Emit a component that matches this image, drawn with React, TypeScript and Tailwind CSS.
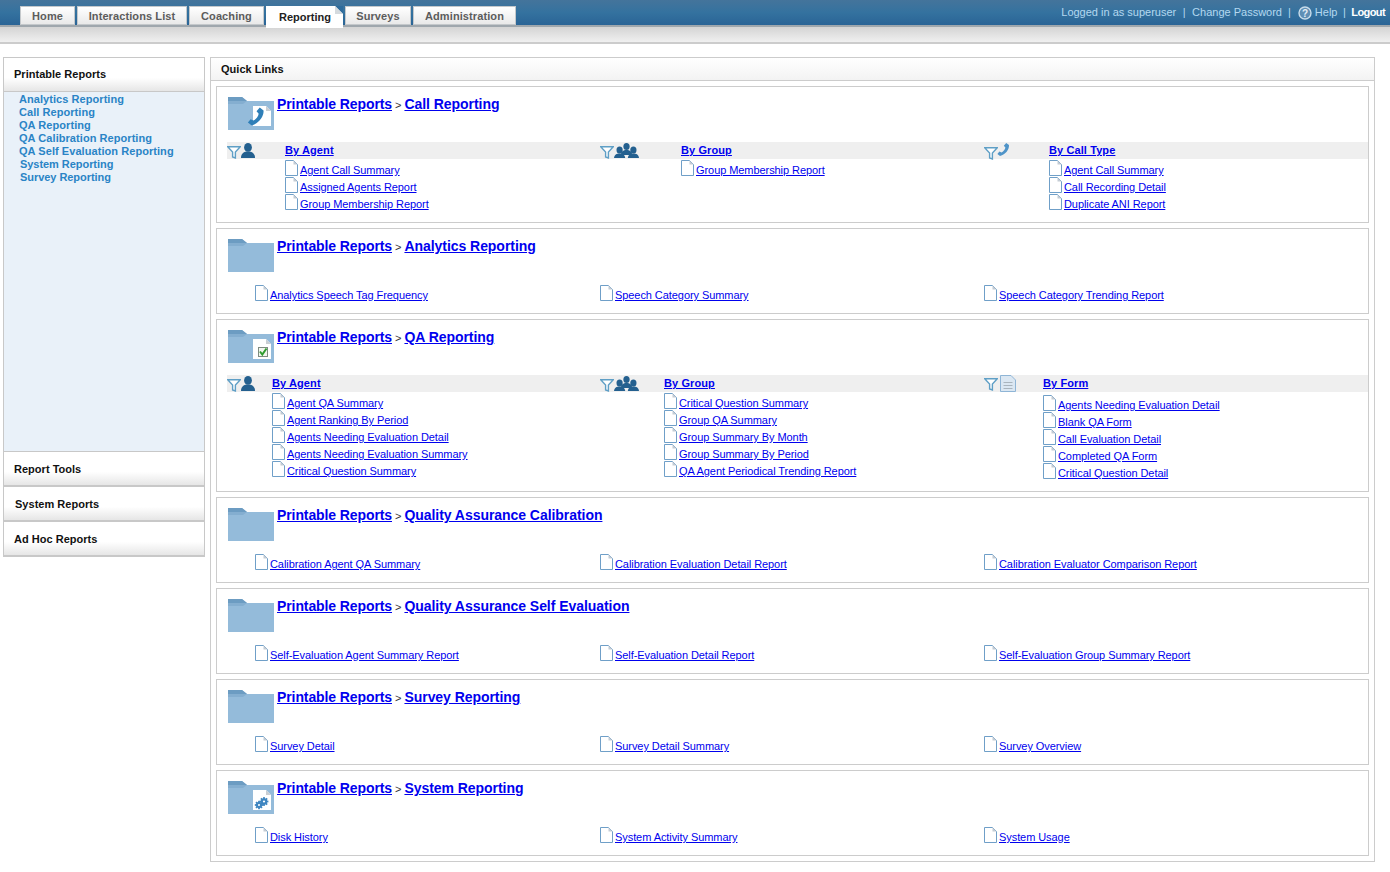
import React from "react";

const PageIcon = () => (
  <svg width="13" height="16" viewBox="0 0 13 16" className="shrink-0">
    <path d="M.5.5H8.5L12.5 4.5V15.5H.5Z" fill="#fff" stroke="#6f9fc8" />
    <path d="M8.5.5V4.5H12.5Z" fill="#c4ccd4" />
  </svg>
);

const FilterIcon = ({ top }: { top: string }) => (
  <svg width="14" height="13" viewBox="0 0 14 13" className={`shrink-0 ${top}`}>
    <path d="M.7.8H13.3L8.4 6V12L5.6 11V6Z" fill="#fff" stroke="#5f9fc6" strokeWidth="1.4" />
  </svg>
);

const Person = () => (
  <g>
    <ellipse cx="7" cy="4.4" rx="3.9" ry="4.4" fill="#24608f" />
    <path d="M0 15C0 10.5 3 8.6 7 8.6S14 10.5 14 15Z" fill="#24608f" />
  </g>
);

const PersonIcon = () => (
  <svg width="14" height="15" viewBox="0 0 14 15" className="shrink-0"><Person /></svg>
);

const GroupIcon = () => (
  <svg width="25" height="15" viewBox="0 0 25 15" className="shrink-0">
    <g transform="translate(0 3.5) scale(.8)"><Person /></g>
    <g transform="translate(13.8 3.5) scale(.8)"><Person /></g>
    <g transform="translate(6.9 0) scale(.8)"><Person /></g>
  </svg>
);

const PhonePath = ({ c }: { c: string }) => (
  <path
    d="M10.2.4 13 2.6C13.3 7 9.6 12.2 4 13.6L1.4 11.4 3.4 9 5.6 10C7.6 8.9 9 7 9.4 5L7.8 3.2Z"
    fill={c}
  />
);

const PhoneIcon = () => (
  <svg width="14" height="15" viewBox="0 0 14 14" className="shrink-0"><PhonePath c="#4f94c8" /></svg>
);

const FormIcon = () => (
  <svg width="16" height="17" viewBox="0 0 16 17" className="shrink-0">
    <path d="M.5.5H11L15.5 5V16.5H.5Z" fill="#dbe7f2" stroke="#8fb5d6" />
    <path d="M3.5 7.5H12.5M3.5 10.5H12.5M3.5 13.5H12.5" stroke="#a9b4bd" strokeWidth="1.2" />
  </svg>
);

const Gear = ({ x, y, r }: { x: number; y: number; r: number }) => (
  <g transform={`translate(${x} ${y})`}>
    <circle r={r} fill="#3f86c0" />
    {[0, 45, 90, 135].map((a) => (
      <rect key={a} x={-r - 1.2} y={-0.9} width={2 * r + 2.4} height={1.8} fill="#3f86c0" transform={`rotate(${a})`} />
    ))}
    <circle r={r * 0.35} fill="#fff" />
  </g>
);

const Folder = ({ kind }: { kind?: "phone" | "check" | "gear" }) => (
  <svg width="46" height="33" viewBox="0 0 46 33" className="shrink-0">
    <path d="M0 0H14L19 4H46V33H0Z" fill="#94bbda" />
    <path d="M0 0H14L19 4H0Z" fill="#6c9cc2" />
    <path d="M0 4H19L15 7H0Z" fill="#84aed0" />
    {kind && (
      <g>
        <path d="M25 9H38L43 14V29H25Z" fill="#fff" />
        <path d="M38 9V14H43Z" fill="#c9ced3" />
      </g>
    )}
    {kind === "phone" && (
      <g transform="translate(18 10) scale(1.35)"><PhonePath c="#2f7fb8" /></g>
    )}
    {kind === "check" && (
      <g>
        <rect x="30.5" y="17.5" width="9" height="9" fill="#f2f5ee" stroke="#7e8b80" />
        <path d="M32 21.5 34.3 24.5 38.5 18.5" fill="none" stroke="#2f9c2f" strokeWidth="2" />
      </g>
    )}
    {kind === "gear" && (
      <g>
        <Gear x={36} y={20.5} r={3.2} />
        <Gear x={31} y={24} r={3} />
      </g>
    )}
  </svg>
);

const Item = ({ label }: { label: string }) => (
  <div className="flex h-[17px] items-start gap-[2px]">
    <PageIcon />
    <a href="#" className="mt-[4px] text-[11px] leading-[13px] tracking-[-0.07px] whitespace-nowrap text-[#0000ee] underline">
      {label}
    </a>
  </div>
);

const Title = ({ name, kind }: { name: string; kind?: "phone" | "check" | "gear" }) => (
  <div className="flex h-[55px] items-start pt-[10px] pl-[11px]">
    <Folder kind={kind} />
    <div className="-mt-[2px] ml-[3px] text-[14px] leading-[18px] font-bold whitespace-nowrap">
      <a href="#" className="tracking-[-0.1px] text-[#0000ee] underline">Printable Reports</a>
      <span className="mx-[3px] text-[11px] font-normal text-[#333]">&gt;</span>
      <a href="#" className="tracking-[-0.05px] text-[#0000ee] underline">{name}</a>
    </div>
  </div>
);

const Simple = ({ name, kind, items }: { name: string; kind?: "phone" | "check" | "gear"; items: string[] }) => (
  <section className="border border-[#cccccc] pb-[11px]">
    <Title name={name} kind={kind} />
    <div className="ml-[10px] grid grid-cols-[373px_384px_1fr] pt-[1px]">
      <div className="pl-[28px]"><Item label={items[0]} /></div>
      <Item label={items[1]} />
      <Item label={items[2]} />
    </div>
  </section>
);

const Head = ({ icons, label, w }: { icons: React.ReactNode; label: string; w: string }) => (
  <div className="flex h-[17px] items-start bg-[#efefef]">
    <div className={`flex h-[17px] shrink-0 items-start pt-[1px] ${w}`}>{icons}</div>
    <a href="#" className="mt-[2px] text-[11px] leading-[13px] font-bold tracking-[0.1px] whitespace-nowrap text-[#0000ee] underline">
      {label}
    </a>
  </div>
);

const sideLinks = [
  "Analytics Reporting",
  "Call Reporting",
  "QA Reporting",
  "QA Calibration Reporting",
  "QA Self Evaluation Reporting",
  "System Reporting",
  "Survey Reporting",
];

const SideHead = ({ label, cls = "" }: { label: string; cls?: string }) => (
  <div className={`flex h-[35px] items-center border-x border-[#c8c8c8] bg-gradient-to-b from-white from-60% to-[#e6e6e6] text-[11px] leading-[13px] font-bold tracking-[0.02px] text-[#111] ${cls}`}>
    {label}
  </div>
);

const tabs = ["Home", "Interactions List", "Coaching", "Reporting", "Surveys", "Administration"];
const tabW = ["w-[55px]", "w-[110px]", "w-[75px]", "w-[77px]", "w-[66px]", "w-[103px]"];

export default function App() {
  return (
    <div className="min-h-[872px] bg-white [font-family:'Liberation_Sans',Arial,sans-serif]">
      <header className="flex h-[27px] justify-between border-b-2 border-[#9fa7ad] bg-gradient-to-b from-[#44749b] via-[#34729f] to-[#2a6496] pt-[6px] pl-[20px]">
        <nav className="flex items-start gap-[2px]">
          {tabs.map((t, i) =>
            t === "Reporting" ? (
              <div key={t} className={`relative flex h-[22px] items-center justify-center bg-white pl-[1px] text-[11px] leading-[13px] font-bold tracking-[0.02px] text-[#222] ${tabW[i]}`}>
                {t}
                <svg width="8" height="8" viewBox="0 0 8 8" className="absolute top-0 right-0">
                  <path d="M0 0H8V8Z" fill="#2f6c9c" />
                  <path d="M0 0 8 8H0Z" fill="#d5dade" />
                </svg>
              </div>
            ) : (
              <div key={t} className={`flex h-[19px] items-center justify-center border border-[#c4c8cb] bg-gradient-to-b from-white to-[#e9e9e9] pt-[1px] text-[11px] leading-[13px] font-bold tracking-[0.1px] text-[#5c5c5c] ${tabW[i]}`}>
                {t}
              </div>
            )
          )}
        </nav>
        <div className="-mt-[6px] flex h-[25px] items-center pr-[5px] text-[11px] leading-[13px] text-[#b4d8f0]">
          <span>Logged in as superuser</span>
          <span className="mx-[6.5px]">|</span>
          <span>Change Password</span>
          <span className="mx-[6px]">|</span>
          <svg width="14" height="14" viewBox="0 0 14 14" className="mr-[3px] ml-[1px]">
            <circle cx="7" cy="7" r="6" fill="#5f8fb5" stroke="#c8dcea" strokeWidth="1.4" />
            <text x="7" y="10.5" textAnchor="middle" fontSize="10" fontWeight="700" fill="#e6eef5" fontFamily="Liberation Sans">?</text>
          </svg>
          <span>Help</span>
          <span className="mx-[5.5px]">|</span>
          <span className="font-bold tracking-[-0.6px] text-white">Logout</span>
        </div>
      </header>
      <div className="h-[17px] border-b-2 border-[#cccccc] bg-gradient-to-b from-[#d4d4d4] to-[#f0f0f0]" />
      <div className="flex gap-[5px] px-[3px] pt-[13px] pb-[10px]">
        <aside className="flex w-[202px] shrink-0 flex-col">
          <SideHead label="Printable Reports" cls="border-y pl-[10px]" />
          <ul className="h-[360px] border-x border-b border-[#c8c8c8] bg-[#e9f1f9] pt-[1px] pl-[15px]">
            {sideLinks.map((s, i) => (
              <li key={s} className={`text-[11px] leading-[13px] font-bold text-[#2a84c6] ${i > 4 ? "pl-[1px] tracking-[-0.05px]" : "tracking-[0.06px]"}`}>
                {s}
              </li>
            ))}
          </ul>
          <SideHead label="Report Tools" cls="border-b-2 pt-[2px] pl-[10px]" />
          <SideHead label="System Reports" cls="border-b-2 pt-[2px] pl-[11px]" />
          <SideHead label="Ad Hoc Reports" cls="border-b-2 pt-[2px] pl-[10px]" />
        </aside>
        <main className="w-[1165px] border border-[#cccccc]">
          <div className="flex h-[23px] items-center border-b border-[#cccccc] bg-gradient-to-b from-white to-[#f3f3f3] pl-[10px] text-[11px] leading-[13px] font-bold tracking-[0.02px] text-[#111]">
            Quick Links
          </div>
          <div className="flex flex-col gap-[5px] p-[5px]">
            <section className="border border-[#cccccc] pb-[11px]">
              <Title name="Call Reporting" kind="phone" />
              <div className="ml-[10px] grid grid-cols-[373px_384px_1fr]">
                <div>
                  <Head w="w-[58px]" label="By Agent" icons={<><FilterIcon top="mt-[3px]" /><PersonIcon /></>} />
                  <div className="pt-[1px] pl-[58px]">
                    {["Agent Call Summary", "Assigned Agents Report", "Group Membership Report"].map((s) => <Item key={s} label={s} />)}
                  </div>
                </div>
                <div>
                  <Head w="w-[81px]" label="By Group" icons={<><FilterIcon top="mt-[3px]" /><GroupIcon /></>} />
                  <div className="pt-[1px] pl-[81px]"><Item label="Group Membership Report" /></div>
                </div>
                <div>
                  <Head w="w-[65px]" label="By Call Type" icons={<><FilterIcon top="mt-[4px]" /><span className="-mt-[1px] -ml-[2px]"><PhoneIcon /></span></>} />
                  <div className="pt-[1px] pl-[65px]">
                    {["Agent Call Summary", "Call Recording Detail", "Duplicate ANI Report"].map((s) => <Item key={s} label={s} />)}
                  </div>
                </div>
              </div>
            </section>
            <Simple name="Analytics Reporting" items={["Analytics Speech Tag Frequency", "Speech Category Summary", "Speech Category Trending Report"]} />
            <section className="border border-[#cccccc] pb-[11px]">
              <Title name="QA Reporting" kind="check" />
              <div className="ml-[10px] grid grid-cols-[373px_384px_1fr]">
                <div>
                  <Head w="w-[45px]" label="By Agent" icons={<><FilterIcon top="mt-[3px]" /><PersonIcon /></>} />
                  <div className="pt-[1px] pl-[45px]">
                    {["Agent QA Summary", "Agent Ranking By Period", "Agents Needing Evaluation Detail", "Agents Needing Evaluation Summary", "Critical Question Summary"].map((s) => <Item key={s} label={s} />)}
                  </div>
                </div>
                <div>
                  <Head w="w-[64px]" label="By Group" icons={<><FilterIcon top="mt-[3px]" /><GroupIcon /></>} />
                  <div className="pt-[1px] pl-[64px]">
                    {["Critical Question Summary", "Group QA Summary", "Group Summary By Month", "Group Summary By Period", "QA Agent Periodical Trending Report"].map((s) => <Item key={s} label={s} />)}
                  </div>
                </div>
                <div>
                  <Head w="w-[59px]" label="By Form" icons={<><FilterIcon top="mt-[2px]" /><span className="-mt-[1px] ml-[2px]"><FormIcon /></span></>} />
                  <div className="pt-[3px] pl-[59px]">
                    {["Agents Needing Evaluation Detail", "Blank QA Form", "Call Evaluation Detail", "Completed QA Form", "Critical Question Detail"].map((s) => <Item key={s} label={s} />)}
                  </div>
                </div>
              </div>
            </section>
            <Simple name="Quality Assurance Calibration" items={["Calibration Agent QA Summary", "Calibration Evaluation Detail Report", "Calibration Evaluator Comparison Report"]} />
            <Simple name="Quality Assurance Self Evaluation" items={["Self-Evaluation Agent Summary Report", "Self-Evaluation Detail Report", "Self-Evaluation Group Summary Report"]} />
            <Simple name="Survey Reporting" items={["Survey Detail", "Survey Detail Summary", "Survey Overview"]} />
            <Simple name="System Reporting" kind="gear" items={["Disk History", "System Activity Summary", "System Usage"]} />
          </div>
        </main>
      </div>
    </div>
  );
}
